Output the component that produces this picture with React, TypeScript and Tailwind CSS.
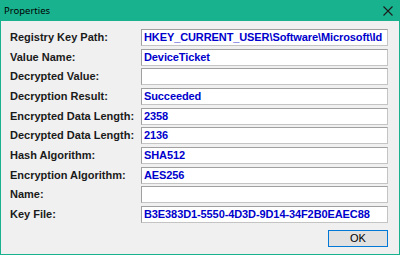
import React from "react";

const rows: [string, string][] = [
  ["Registry Key Path:", "HKEY_CURRENT_USER\\Software\\Microsoft\\Id"],
  ["Value Name:", "DeviceTicket"],
  ["Decrypted Value:", ""],
  ["Decryption Result:", "Succeeded"],
  ["Encrypted Data Length:", "2358"],
  ["Decrypted Data Length:", "2136"],
  ["Hash Algorithm:", "SHA512"],
  ["Encryption Algorithm:", "AES256"],
  ["Name:", ""],
  ["Key File:", "B3E383D1-5550-4D3D-9D14-34F2B0EAEC88"],
];

export default function App() {
  return (
    <div
      className="w-[400px] h-[255px] flex flex-col bg-[#19b28f] overflow-hidden"
      style={{ fontFamily: '"Liberation Sans", Arial, sans-serif' }}
    >
      <div className="h-[21px] shrink-0 flex items-center justify-between pl-[4px] pr-[7px]">
        <span className="text-[9.5px] text-black leading-none" style={{ fontFamily: '"Noto Sans", sans-serif' }}>
          Properties
        </span>
        <svg width="10" height="10" viewBox="0 0 10 10">
          <path d="M0.5 0.5 L9.5 9.5 M9.5 0.5 L0.5 9.5" stroke="#1b1b1b" strokeWidth="1.1" />
        </svg>
      </div>
      <div className="flex-1 mx-[1px] mb-[1px] bg-[#f0f0f0] flex flex-col pt-[8px] pl-[9px] pr-[11px]">
        <div className="flex flex-col gap-[2.66px]">
          {rows.map(([label, value]) => (
            <div key={label} className="flex items-center h-[17px]">
              <div className="w-[131px] shrink-0 text-[11px] font-bold text-[#1a1a1a] leading-none whitespace-nowrap">
                {label}
              </div>
              <div className="flex-1 min-w-0 h-[17px] bg-white border border-t-[#a0a0a0] border-l-[#a0a0a0] border-r-[#c4c4c4] border-b-[#c4c4c4] overflow-hidden flex items-center pl-[2px]">
                <span className="text-[11px] font-bold text-[#0000cc] leading-none whitespace-nowrap tracking-[-0.1px]">
                  {value}
                </span>
              </div>
            </div>
          ))}
        </div>
        <div className="flex justify-end mt-[7px]">
          <button className="w-[60px] h-[17px] bg-[#e1e1e1] border border-[#0078d7] text-[11px] text-black leading-none flex items-center justify-center">
            OK
          </button>
        </div>
      </div>
    </div>
  );
}
